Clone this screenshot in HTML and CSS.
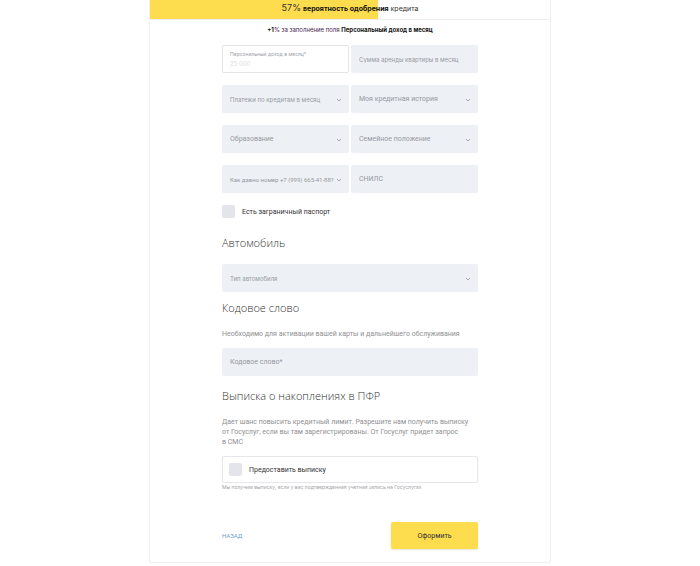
FILE: index.html
```html
<!DOCTYPE html>
<html lang="ru">
<head>
    <meta charset="UTF-8">
    <meta name="viewport" content="width=device-width, initial-scale=1.0">
    <title>Заявка на кредит</title>
    <link rel="stylesheet" href="styles.css">
</head>
<body>
    <main class="card">
        <div class="progress">
            <p class="progress-text"><span class="percent">57%</span> <b>вероятность одобрения</b> кредита</p>
        </div>
        <p class="hint"><b>+1</b>% за заполнение поля <b>Персональный доход в месяц</b></p>

        <form class="form">
            <div class="fields">
                <div class="field active">
                    <label for="income">Персональный доход в месяц*</label>
                    <input type="text" id="income" placeholder="25 000">
                </div>
                <div class="field">
                    <input class="small" type="text" aria-label="Сумма аренды квартиры в месяц" placeholder="Сумма аренды квартиры в месяц">
                </div>
                <div class="field">
                    <select class="small" aria-label="Платежи по кредитам в месяц"><option>Платежи по кредитам в месяц</option></select>
                    <svg class="arrow" viewBox="0 0 6 4"><path d="M1 1l2 2 2-2"/></svg>
                </div>
                <div class="field">
                    <select aria-label="Моя кредитная история"><option>Моя кредитная история</option></select>
                    <svg class="arrow" viewBox="0 0 6 4"><path d="M1 1l2 2 2-2"/></svg>
                </div>
                <div class="field">
                    <select aria-label="Образование"><option>Образование</option></select>
                    <svg class="arrow" viewBox="0 0 6 4"><path d="M1 1l2 2 2-2"/></svg>
                </div>
                <div class="field">
                    <select aria-label="Семейное положение"><option>Семейное положение</option></select>
                    <svg class="arrow" viewBox="0 0 6 4"><path d="M1 1l2 2 2-2"/></svg>
                </div>
                <div class="field">
                    <select class="tiny" aria-label="Как давно номер +7 (999) 665-41-88?"><option>Как давно номер +7 (999) 665-41-88?</option></select>
                    <svg class="arrow" viewBox="0 0 6 4"><path d="M1 1l2 2 2-2"/></svg>
                </div>
                <div class="field">
                    <input type="text" aria-label="СНИЛС" placeholder="СНИЛС">
                </div>
            </div>

            <label class="check"><input type="checkbox">Есть заграничный паспорт</label>

            <h2>Автомобиль</h2>
            <div class="field">
                <select class="small" aria-label="Тип автомобиля"><option>Тип автомобиля</option></select>
                <svg class="arrow" viewBox="0 0 6 4"><path d="M1 1l2 2 2-2"/></svg>
            </div>

            <h2>Кодовое слово</h2>
            <p class="text">Необходимо для активации вашей карты и дальнейшего обслуживания</p>
            <div class="field">
                <input type="text" aria-label="Кодовое слово" placeholder="Кодовое слово*">
            </div>

            <h2>Выписка о накоплениях в ПФР</h2>
            <p class="text">Дает шанс повысить кредитный лимит. Разрешите нам получить выписку<br>от Госуслуг, если вы там зарегистрированы. От Госуслуг придет запрос<br>в СМС</p>
            <label class="check boxed"><input type="checkbox">Предоставить выписку</label>
            <p class="note">Мы получим выписку, если у вас подтвержденная учетная запись на Госуслугах</p>

            <div class="actions">
                <a href="#">НАЗАД</a>
                <button type="submit">Оформить</button>
            </div>
        </form>
    </main>
</body>
</html>
```

FILE: styles.css
```css
* {
    box-sizing: border-box;
}
body {
    margin: 0;
    background-color: #fff;
    color: #333;
    font-family: Roboto, "Liberation Sans", sans-serif;
    font-size: 7px;
}
p, h2 {
    margin: 0;
}
.card {
    max-width: 402px;
    margin: 0 auto;
    border: 1px solid #efeff1;
    border-top: none;
    border-radius: 0 0 3px 3px;
}
.progress {
    padding: 1px 0 3px;
    border-bottom: 1px solid #efeff1;
    background: linear-gradient(to right, #fddc4e 57%, #fff 57%);
    font-family: Inter, sans-serif;
    text-align: center;
}
.progress-text {
    line-height: 14px;
}
.percent {
    font-size: 9px;
}
.progress b {
    color: #111;
}
.hint {
    padding-top: 4px;
    line-height: 12px;
    font-family: Inter, sans-serif;
    font-size: 6px;
    color: #3f2350;
    text-align: center;
}
.hint b {
    color: #111;
}
.form {
    max-width: 256px;
    margin: 0 auto;
    padding: 9px 0 13px;
}
.fields {
    display: grid;
    grid-template-columns: 1fr 1fr;
    gap: 12px 2px;
}
.field {
    position: relative;
    height: 28px;
    border-radius: 2px;
    background-color: #edf0f5;
}
.field input, .field select {
    display: block;
    width: 100%;
    height: 100%;
    padding: 0 8px;
    border: none;
    background: none;
    color: #959aa2;
    font: inherit;
    appearance: none;
}
.field ::placeholder {
    color: #959aa2;
    opacity: 1;
}
.field .small {
    font-family: Inter, sans-serif;
    font-size: 6px;
}
.field .tiny {
    font-size: 6px;
}
.arrow {
    position: absolute;
    top: 13px;
    right: 7px;
    width: 6px;
    height: 4px;
    fill: none;
    stroke: #a5a9b0;
    pointer-events: none;
}
.field.active {
    display: flex;
    flex-direction: column;
    padding: 4px 7px;
    border: 1px solid #e2e4e8;
    background-color: #fff;
    font-family: Inter, sans-serif;
}
.active label {
    line-height: 8px;
    font-size: 5px;
    color: #9da1a8;
}
.field.active input {
    height: 10px;
    padding: 0;
    font-size: 6px;
}
.active ::placeholder {
    color: #dcdde0;
}
.check {
    display: flex;
    align-items: center;
    gap: 7px;
    margin-top: 12px;
}
.check input {
    width: 13px;
    height: 13px;
    margin: 0;
    border-radius: 2px;
    background-color: #e3e5ea;
    appearance: none;
}
h2 {
    margin: 16px 0 12px;
    line-height: 18px;
    font-family: "Open Sans", "Noto Sans", sans-serif;
    font-size: 11px;
    font-weight: 300;
}
.field + h2 {
    margin: 7px 0 12px;
}
.text {
    margin-bottom: 9px;
    line-height: 10px;
    color: #8f9092;
}
.field + h2 ~ .field + h2 {
    margin: 11px 0 12px;
}
.boxed {
    height: 27px;
    margin-top: 0;
    padding: 0 6px;
    border: 1px solid #e6e7ea;
    border-radius: 2px;
}
.note {
    line-height: 9px;
    font-family: Inter, sans-serif;
    font-size: 5px;
    color: #a3a4a6;
}
.actions {
    display: flex;
    justify-content: space-between;
    align-items: center;
    margin-top: 30px;
}
.actions a {
    font-size: 6px;
    color: #6a9fd0;
    text-decoration: none;
}
.actions button {
    width: 87px;
    height: 27px;
    border: none;
    border-radius: 2px;
    background-color: #fddc4e;
    box-shadow: 0 1px 2px #e8e4d0;
    color: #333;
    font: inherit;
    cursor: pointer;
}
```
